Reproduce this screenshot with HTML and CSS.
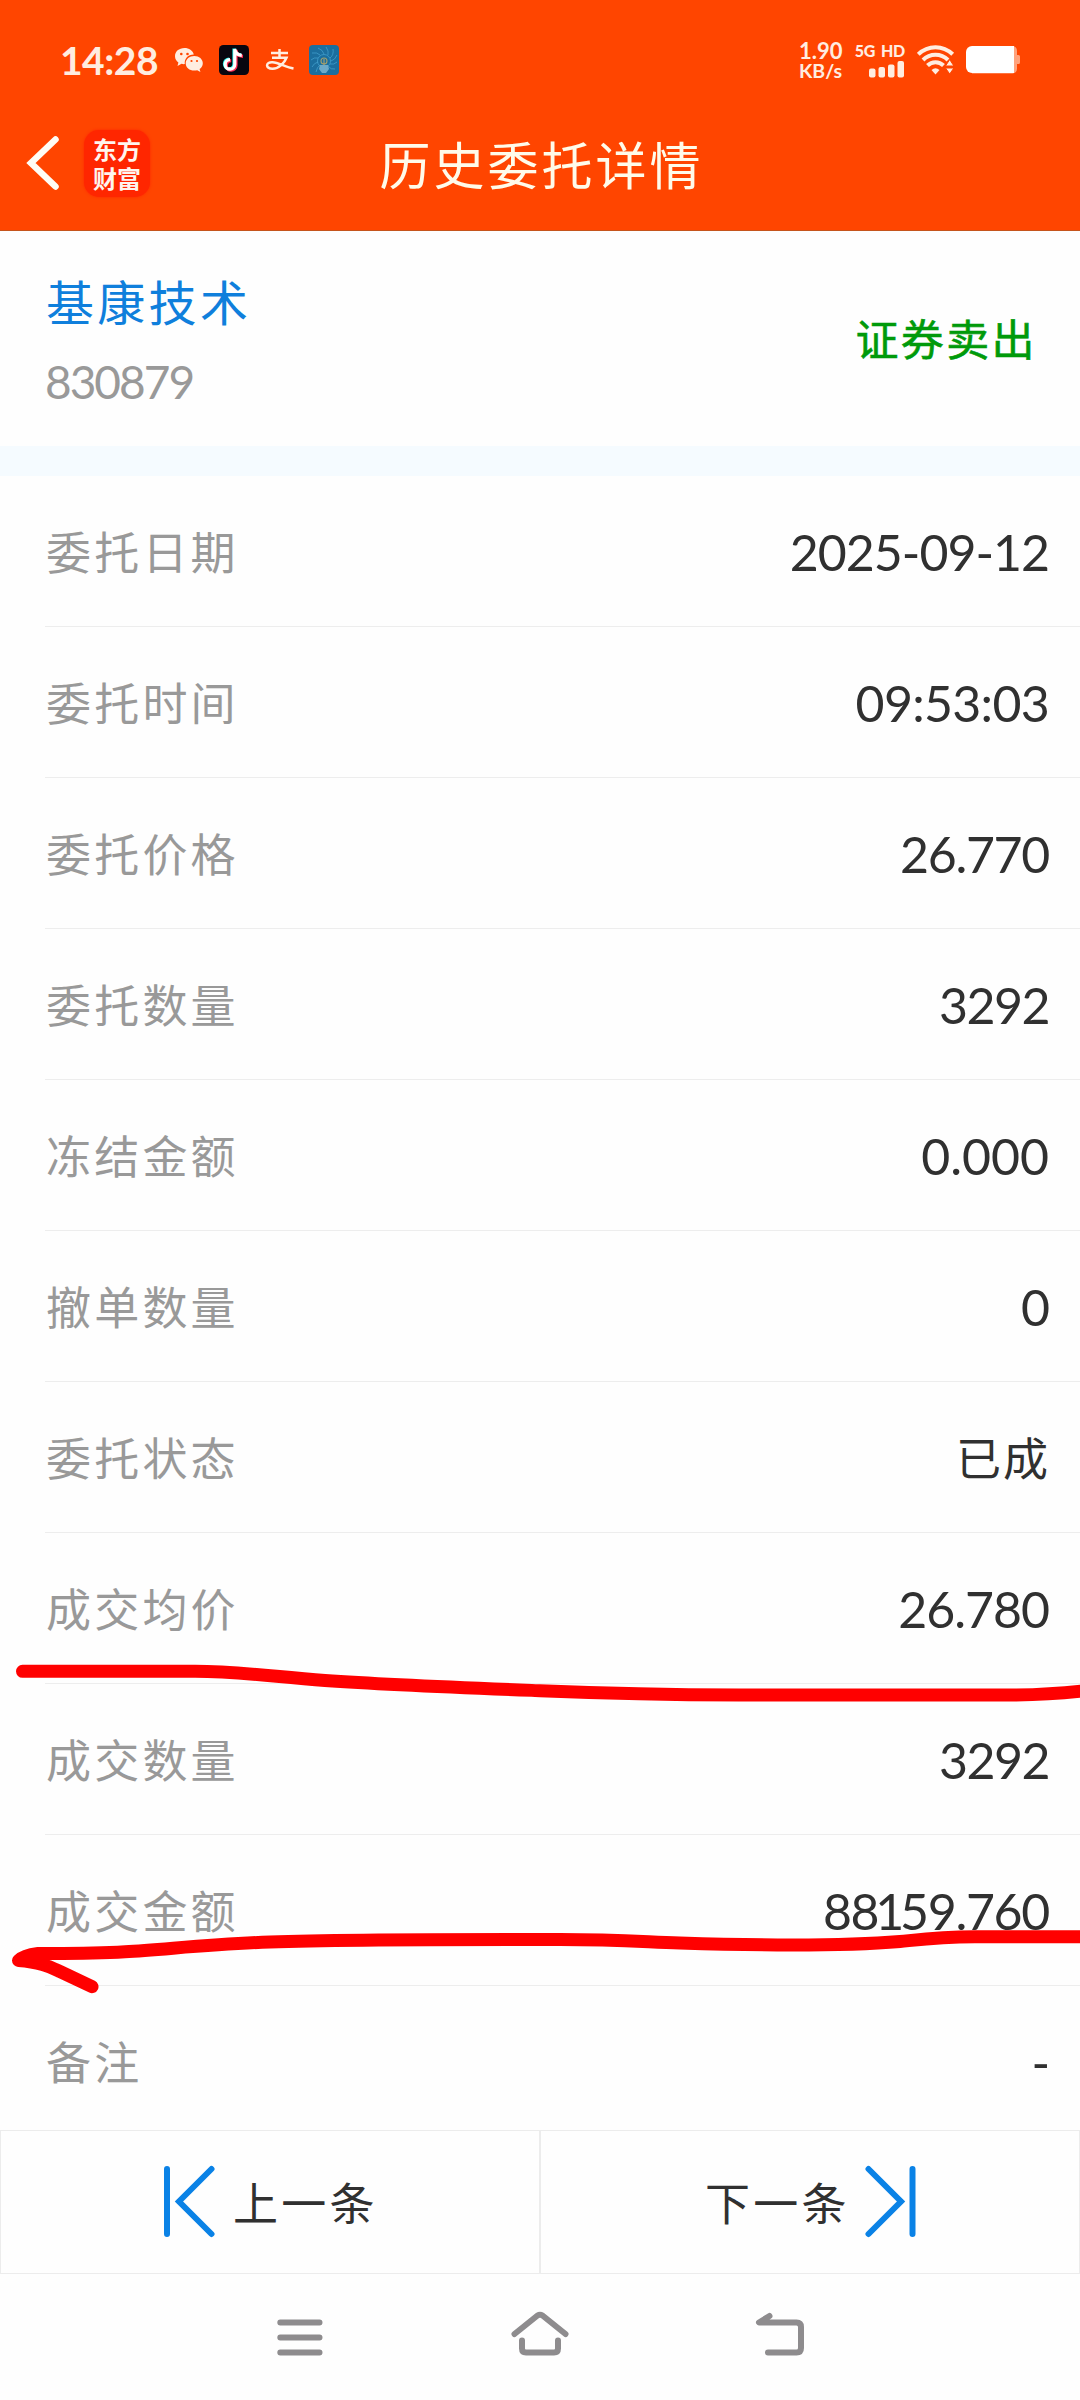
FILE: index.html
```html
<!DOCTYPE html>
<html lang="zh-CN">
<head>
<meta charset="utf-8">
<title>历史委托详情</title>
<link rel="stylesheet" href="styles.css">
</head>
<body>
<div class="screen">
  <header class="top">
    <div class="status">
      <div class="status-left">
        <span class="clock">14:28</span>
        <svg class="ic-wechat" width="30" height="26" viewBox="0 0 30 26" fill="#ffede0">
          <path d="M10.500 1C4.900 1 1 4.600 1 9.200c0 2.700 1.300 4.800 3.400 6.300L3.500 19l4-2.200c1.300.3 2 .4 3.300.3C10.200 11.500 14 7.600 19.800 7.500 18.800 3.500 15 1 10.500 1z"/>
          <path d="M20.300 8.900c-4.900 0-8.600 3.200-8.600 7.300s3.700 7.400 8.600 7.400c1 0 2-.1 2.900-.4l3.200 1.800-.8-3c2-1.400 3.200-3.500 3.200-5.800 0-4.100-3.700-7.300-8.500-7.300z"/>
          <g fill="#ff4500"><circle cx="7.300" cy="7" r="1.300"/><circle cx="13.500" cy="7" r="1.300"/><circle cx="17.500" cy="14" r="1.100"/><circle cx="23" cy="14" r="1.100"/></g>
        </svg>
        <svg class="ic-tiktok" width="30" height="30" viewBox="0 0 30 30">
          <rect width="30" height="30" rx="4.500" fill="#08060f"/>
          <g fill="none" stroke-width="3.200">
            <path d="M15.800 4v15.500a4.800 4.800 0 1 1-4.800-4.900M15.800 4c.3 3.500 3 6 7 6.300" stroke="#25f4ee" transform="translate(-.8 -.5)"/>
            <path d="M15.800 4v15.500a4.800 4.800 0 1 1-4.800-4.900M15.800 4c.3 3.500 3 6 7 6.300" stroke="#fe2c55" transform="translate(1.200 1)"/>
            <path d="M15.800 4v15.500a4.800 4.800 0 1 1-4.800-4.900M15.800 4c.3 3.500 3 6 7 6.300" stroke="#fff"/>
          </g>
        </svg>
        <svg class="ic-alipay" width="30" height="24" viewBox="0 0 30 24" fill="none" stroke="#ffede0" stroke-width="2.500">
          <path d="M6 5h17M14.500 1v8.500M7 9.700h14.500c-2 5-7.500 11-14 11-7.500 0-7-7 0-6.500 6 .4 13 4.800 21 6.300" />
        </svg>
        <svg class="ic-blue" width="30" height="30" viewBox="0 0 30 30">
          <rect width="30" height="30" rx="4" fill="#1b6e9e"/>
          <g fill="none" stroke="#4fb0dc" stroke-width=".7" opacity=".85">
            <path d="M15 9Q14 5 9 3M19 10Q20 6 17 2M21 13Q25 10 24 4M22 16Q26 15 28 10M21 19Q25 20 28 17M19 21Q22 25 26 24M11 10Q8 7 3 8M9 13Q5 12 2 15M9 17Q5 18 3 22M11 20Q8 22 7 27"/>
            <circle cx="15" cy="16" r="6.500"/>
          </g>
          <path d="M11 20h8l1 4-3 4h-4l-3-4z" fill="#6caac8"/>
          <circle cx="15" cy="16" r="3" fill="#1b6e9e" stroke="#a2a06c" stroke-width="1.100"/>
          <path d="M15 14v6" stroke="#b7a56b"/>
        </svg>
      </div>
      <div class="status-right">
        <div class="speed"><span class="rate">1.90</span><span class="unit">KB/s</span></div>
        <div class="signal">
          <div class="net"><span>5G</span><span>HD</span></div>
          <svg width="36" height="17" viewBox="0 0 36 17" fill="#ffede0">
            <rect x="0" y="7.500" width="6.500" height="9" rx="2"/><rect x="9.500" y="6" width="6.500" height="10.500" rx="2"/><rect x="19" y="3.500" width="6.500" height="13" rx="2"/><rect x="28.500" y="0" width="6.500" height="16.500" rx="2"/>
          </svg>
        </div>
        <svg class="ic-wifi" width="38" height="30" viewBox="0 0 38 30">
          <g fill="none" stroke="#ffede0" stroke-width="4">
            <path d="M1.300 9.300C11 -.2 26 -.2 35.700 9.300"/>
            <path d="M6 15C13 8 24 8 31 15"/>
            <path d="M10.500 20.500C15 16 22 16 26.500 20.500"/>
          </g>
          <path d="M14.500 25q4-3.500 8 0l-4 4.500z" fill="#ffede0"/>
          <path d="M28.500 21l4.200-6.500 4.200 6.500zM28.500 23h8.400l-4.200 6z" fill="#ffede0" stroke="#ff4500" stroke-width="1"/>
        </svg>
        <svg class="ic-batt" width="55" height="28" viewBox="0 0 55 28">
          <path d="M6 0h40.500a5 5 0 0 1 4.500 5v4h1.500q1.500 0 1.500 1.500v6q0 1.500-1.500 1.500H51v4.500a5 5 0 0 1-4.500 5H6z" fill="#ffa27c"/>
          <path d="M6 0h42v27H6a6 6 0 0 1-6-6V6a6 6 0 0 1 6-6z" fill="#fff"/>
        </svg>
      </div>
    </div>
    <div class="titlebar">
      <div class="brand">
        <svg width="34" height="56" viewBox="0 0 34 56"><path d="M29.500 4.500L5 28l24.500 23.500" fill="none" stroke="#fffdf5" stroke-width="6.500" stroke-linecap="round" stroke-linejoin="miter"/></svg>
        <div class="logo"><span>东方<br>财富</span></div>
      </div>
      <h1 class="title">历史委托详情</h1>
      <div></div>
    </div>
  </header>

  <section class="stock">
    <div class="stock-id">
      <div class="stock-name">基康技术</div>
      <div class="stock-code">830879</div>
    </div>
    <div class="side">证券卖出</div>
  </section>
  <div class="band"></div>

  <main class="list">
    <div class="row"><span class="label">委托日期</span><span class="value">2025-09-12</span></div>
    <div class="row"><span class="label">委托时间</span><span class="value time">09:53:03</span></div>
    <div class="row"><span class="label">委托价格</span><span class="value price">26.770</span></div>
    <div class="row"><span class="label">委托数量</span><span class="value count">3292</span></div>
    <div class="row"><span class="label">冻结金额</span><span class="value frozen">0.000</span></div>
    <div class="row"><span class="label">撤单数量</span><span class="value">0</span></div>
    <div class="row"><span class="label">委托状态</span><span class="value cjk">已成</span></div>
    <div class="row"><span class="label">成交均价</span><span class="value">26.780</span></div>
    <div class="row"><span class="label">成交数量</span><span class="value count">3292</span></div>
    <div class="row"><span class="label">成交金额</span><span class="value amount">88<span class="one">1</span>59.760</span></div>
    <div class="row last"><span class="label">备注</span><span class="value">-</span></div>
  </main>

  <div class="pager">
    <div class="page prev">
      <svg width="51" height="73" viewBox="0 0 51 73" fill="none" stroke="#0a82e6" stroke-width="6" stroke-linecap="round"><path d="M3 4v65M47.500 4L15 36.500 47.500 69"/></svg>
      <span>上一条</span>
    </div>
    <div class="page next">
      <span>下一条</span>
      <svg width="51" height="73" viewBox="0 0 51 73" fill="none" stroke="#0a82e6" stroke-width="6" stroke-linecap="round"><path d="M47.500 4v65M3.500 4L36 36.500 3.500 69"/></svg>
    </div>
  </div>

  <nav class="sysnav">
    <svg width="60" height="48" viewBox="0 0 60 48"><path d="M10.300 12.500h39.200M10.300 27.500h39.200M10.300 42.500h39.200"/></svg>
    <svg width="60" height="48" viewBox="0 0 60 48"><path d="M4.500 24L27.500 5.500q2.500-1.500 5 0L55.500 24M12 30.500v8q0 4 4 4h28q4 0 4-4v-8"/></svg>
    <svg width="60" height="48" viewBox="0 0 60 48"><path d="M19.500 6L9 12.500h37.500q4.500 0 4.500 4.500v21q0 4.500-4.500 4.500h-28.500"/></svg>
  </nav>

  <svg class="marks" width="1080" height="400" viewBox="0 1640 1080 400" fill="none" stroke="#f00" stroke-width="13" stroke-linecap="round" stroke-linejoin="round">
    <path d="M22.500 1671.300H195C240 1671.300 275 1677 325 1680.500C390 1685 470 1688 540 1690.700C620 1694 670 1694.800 740 1695H1005Q1050 1695 1090 1690"/>
    <path d="M1090 1936.700H975C940 1937 925 1939 900 1941.500C840 1946.500 760 1945.500 680 1943C620 1940.500 610 1939.500 560 1939.500C480 1939.500 350 1939 270 1942C210 1944 165 1949.500 125 1951.700C90 1953.800 60 1953.300 38 1953.400Q24 1955 18.500 1960.500C40 1962 50 1967 60 1971.500L92 1986.700"/>
  </svg>
</div>
</body>
</html>
```
FILE: styles.css
```css
* { box-sizing: border-box; }
body {
  margin: 0;
  background: #fefefe;
  font-family: Lato, "Noto Sans CJK SC", sans-serif;
}
.screen {
  position: relative;
  width: 1080px;
  height: 2400px;
  overflow: hidden;
  display: flex;
  flex-direction: column;
}
svg { display: block; flex: none; }

.top { height: 231px; background: #ff4500; border-bottom: 1px solid #c5541c; }
.status {
  height: 96px;
  padding: 24px 60px 0 60px;
  display: flex;
  justify-content: space-between;
  align-items: center;
  color: #ffede0;
}
.status-left, .status-right { display: flex; align-items: center; }
.clock {
  width: 114px;
  font-size: 39px;
  line-height: 40px;
  font-weight: 700;
  letter-spacing: -0.5px;
}
.ic-tiktok { margin-left: 15px; }
.ic-alipay { margin-left: 16px; }
.ic-blue { margin-left: 14px; }
.speed { display: flex; flex-direction: column; width: 56px; font-weight: 700; }
.rate { font-size: 22px; line-height: 20px; }
.unit { font-size: 19.500px; line-height: 19px; }
.signal { display: flex; flex-direction: column; align-items: flex-end; width: 50px; gap: 3px; }
.net { display: flex; gap: 6px; font-size: 16px; line-height: 15px; font-weight: 900; letter-spacing: -0.3px; }
.ic-wifi { margin-left: 12px; }
.ic-batt { margin-left: 11px; margin-right: -1px; }

.titlebar {
  height: 134px;
  display: grid;
  grid-template-columns: 1fr auto 1fr;
  align-items: center;
}
.brand { display: flex; align-items: center; padding-left: 26px; gap: 24px; }
.logo {
  width: 66px;
  height: 67px;
  border-radius: 15px;
  background: #ff2600;
  box-shadow: 0 0 3px #ff2600;
  color: #fff5ee;
  display: flex;
  align-items: center;
  justify-content: center;
  font-family: "Noto Sans CJK SC", sans-serif;
  font-weight: 700;
  font-size: 24px;
  line-height: 29px;
}
.title {
  margin: 0;
  font-family: "Noto Sans CJK SC", sans-serif;
  font-weight: 400;
  font-size: 51px;
  line-height: 60px;
  letter-spacing: 3px;
  padding-left: 3px;
  color: #fffbea;
}

.stock {
  height: 215px;
  padding: 1px 43px 0 46px;
  display: flex;
  justify-content: space-between;
  align-items: center;
}
.stock-name {
  font-family: "Noto Sans CJK SC", sans-serif;
  font-size: 48px;
  line-height: 70px;
  letter-spacing: 3.300px;
  color: #0f7fdc;
  margin-top: 4px;
}
.stock-code { font-size: 46px; line-height: 70px; letter-spacing: -2px; color: #999; margin-top: 12px; margin-left: -1px; }
.side {
  font-family: "Noto Sans CJK SC", sans-serif;
  font-size: 43px;
  line-height: 60px;
  letter-spacing: 2.400px;
  color: #009a0a;
  margin-bottom: 4px;
  -webkit-text-stroke: 0.6px #009a0a;
}
.band { height: 30px; background: #f5fbff; }

.list { padding-left: 45px; height: 1654px; }
.row {
  height: 151px;
  padding: 0 31px 0 1px;
  border-bottom: 1px solid #ededed;
  display: flex;
  justify-content: space-between;
  align-items: center;
}
.row.last { height: 144px; border-bottom: 0; padding-top: 6px; }
.label {
  font-family: "Noto Sans CJK SC", sans-serif;
  font-size: 45px;
  line-height: 60px;
  letter-spacing: 3.200px;
  color: #999;
}
.value { font-size: 50px; line-height: 60px; letter-spacing: -1px; color: #303030; padding-top: 2px; }
.value.time { letter-spacing: -0.7px; }
.value.price { letter-spacing: -1.300px; }
.value.count { letter-spacing: -1.500px; }
.value.frozen { letter-spacing: 0; }
.value.amount { letter-spacing: -1.300px; }
.amount .one { margin: 0 -3px; }
.value.cjk {
  font-family: "Noto Sans CJK SC", sans-serif;
  font-size: 45px;
  letter-spacing: 2px;
  padding: 0;
  margin-right: -1px;
}

.pager { height: 144px; display: grid; grid-template-columns: 1fr 1fr; }
.page {
  border: 1px solid #ececec;
  display: flex;
  align-items: center;
  font-family: "Noto Sans CJK SC", sans-serif;
  font-size: 45px;
  line-height: 60px;
  letter-spacing: 3.200px;
  color: #303030;
}
.page svg { margin-top: -2px; }
.prev { padding-left: 163px; gap: 18px; }
.next { padding-left: 164px; gap: 15px; }

.sysnav { height: 126px; display: flex; justify-content: center; gap: 180px; padding-top: 36px; }
.sysnav path {
  fill: none;
  stroke: #8e8c8e;
  stroke-width: 6;
  stroke-linecap: round;
  stroke-linejoin: round;
}
.marks { position: absolute; left: 0; top: 1640px; }
```
